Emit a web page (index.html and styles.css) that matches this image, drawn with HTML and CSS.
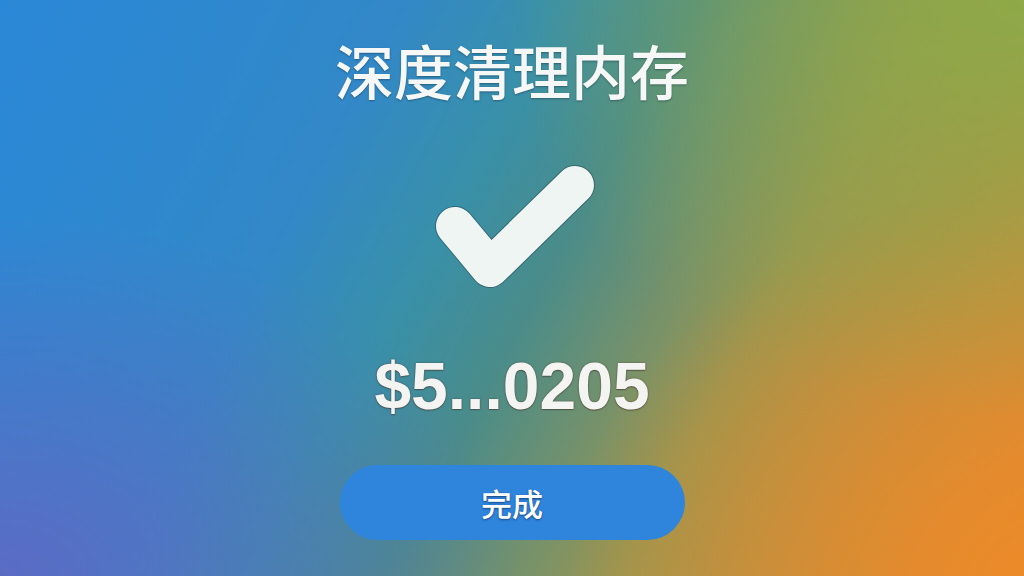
FILE: index.html
```html
<!DOCTYPE html>
<html lang="zh-CN">
<head>
    <meta charset="UTF-8">
    <meta name="viewport" content="width=device-width, initial-scale=1.0">
    <title>深度清理内存</title>
    <link rel="stylesheet" href="styles.css">
</head>
<body>
    <div class="screen">
        <h1 class="title">深度清理内存</h1>
        <svg class="check" width="180" height="140" viewBox="0 0 180 140">
            <path class="check-edge" d="M33 69 L68 111 L153 28"/>
            <path class="check-fill" d="M33 69 L68 111 L153 28"/>
        </svg>
        <p class="amount">$5...0205</p>
        <button class="done">完成</button>
    </div>
</body>
</html>
```

FILE: styles.css
```css
* {
    padding: 0;
    margin: 0;
    box-sizing: border-box;
}
html, body {
    width: 1024px;
    height: 576px;
    overflow: hidden;
}
.screen {
    width: 1024px;
    height: 576px;
    display: flex;
    flex-direction: column;
    align-items: center;
    background:
        radial-gradient(ellipse 520px 420px at 100% 0%, rgba(140, 170, 72, 0.95), rgba(140, 170, 72, 0) 100%),
        radial-gradient(ellipse 520px 360px at 0% 100%, rgba(96, 104, 196, 0.9), rgba(96, 104, 196, 0) 100%),
        radial-gradient(ellipse 460px 380px at 100% 100%, rgba(236, 138, 40, 0.95), rgba(236, 138, 40, 0) 100%),
        linear-gradient(118deg, #2a88d8 0%, #3288c8 30%, #3890aa 42%, #4a8c8a 52%, #9a9650 70%, #e08a34 100%);
    font-family: "Noto Sans CJK SC", "Noto Sans", sans-serif;
    color: #fff;
}
.title {
    margin-top: 40px;
    font-size: 59px;
    line-height: 59px;
    font-weight: 500;
    color: #f6f8f8;
    text-shadow: 0 1px 2px rgba(20, 40, 60, 0.45);
}
.check {
    margin-top: 58px;
    display: block;
}
.check path {
    fill: none;
    stroke-linecap: round;
    stroke-linejoin: round;
}
.check-edge {
    stroke: rgba(30, 50, 60, 0.4);
    stroke-width: 40;
}
.check-fill {
    stroke: #eef5f3;
    stroke-width: 38;
}
.amount {
    margin-top: 57px;
    font-family: "Liberation Sans", Arial, sans-serif;
    font-weight: bold;
    font-size: 66px;
    line-height: 64px;
    color: #f4f4f2;
    text-shadow: 0 0 2px rgba(70, 50, 40, 0.7), 0 1px 1px rgba(70, 50, 40, 0.5);
}
.done {
    margin-top: 47px;
    width: 345px;
    height: 75px;
    border: none;
    border-radius: 38px;
    background-color: #2f84dc;
    color: #fff;
    font-family: "Noto Sans CJK SC", "Noto Sans", sans-serif;
    font-size: 31px;
    font-weight: 500;
    text-shadow: 0 1px 2px rgba(10, 30, 70, 0.6);
}
```
